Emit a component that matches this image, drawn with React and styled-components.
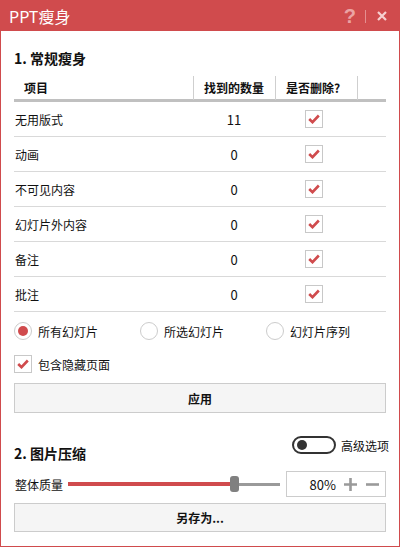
import React, { useState } from "react";
import styled, { createGlobalStyle } from "styled-components";

const RED = "#d04b4d";

const GlobalStyle = createGlobalStyle`
  * { box-sizing: border-box; }
  body {
    margin: 0;
    background: #fff;
    font-family: "Noto Sans CJK SC", "Noto Sans", sans-serif;
    font-size: 12px;
    color: #111;
  }
`;

const rows = [
  { name: "无用版式", count: 11 },
  { name: "动画", count: 0 },
  { name: "不可见内容", count: 0 },
  { name: "幻灯片外内容", count: 0 },
  { name: "备注", count: 0 },
  { name: "批注", count: 0 },
];

const scopes = ["所有幻灯片", "所选幻灯片", "幻灯片序列"];

function CheckMark() {
  return (
    <svg width="12" height="10" viewBox="0 0 12 10">
      <polyline
        points="1.2,5 4.5,8.2 10.8,1.5"
        fill="none"
        stroke={RED}
        strokeWidth="2.6"
        strokeLinejoin="miter"
      />
    </svg>
  );
}

function App() {
  const [checked, setChecked] = useState(rows.map(() => true));
  const [scope, setScope] = useState(0);
  const [hidden, setHidden] = useState(true);
  const [quality, setQuality] = useState(80);

  const toggleRow = (i) =>
    setChecked((c) => c.map((v, idx) => (idx === i ? !v : v)));

  return (
    <>
      <GlobalStyle />
      <W.Window>
        <W.TitleBar>
          <W.Title>PPT瘦身</W.Title>
          <W.TitleActions>
            <W.Help>?</W.Help>
            <W.Divider />
            <svg width="10" height="10" viewBox="0 0 10 10">
              <path d="M1 1l8 8M9 1l-8 8" stroke="#f6d0d0" strokeWidth="2.2" />
            </svg>
          </W.TitleActions>
        </W.TitleBar>

        <W.Body>
          <W.SectionTitle>1. 常规瘦身</W.SectionTitle>

          <T.Header>
            <T.HeadCell>项目</T.HeadCell>
            <T.HeadCell $divider>找到的数量</T.HeadCell>
            <T.HeadCell $divider>是否删除?</T.HeadCell>
            <T.HeadCell $divider />
          </T.Header>

          {rows.map((row, i) => (
            <T.Row key={row.name}>
              <T.Name>{row.name}</T.Name>
              <T.Count>{row.count}</T.Count>
              <T.CheckCell>
                <C.Box onClick={() => toggleRow(i)}>
                  {checked[i] && <CheckMark />}
                </C.Box>
              </T.CheckCell>
              <span />
            </T.Row>
          ))}

          <O.RadioRow>
            {scopes.map((s, i) => (
              <O.Option key={s} onClick={() => setScope(i)}>
                <O.Radio $on={scope === i} />
                {s}
              </O.Option>
            ))}
          </O.RadioRow>

          <O.CheckRow onClick={() => setHidden(!hidden)}>
            <C.Box>{hidden && <CheckMark />}</C.Box>
            包含隐藏页面
          </O.CheckRow>

          <W.Button $top={7}>应用</W.Button>

          <S.Header>
            <W.SectionTitle $flush>2. 图片压缩</W.SectionTitle>
            <S.ToggleWrap>
              <S.Toggle />
              高级选项
            </S.ToggleWrap>
          </S.Header>

          <S.SliderRow>
            <S.Label>整体质量</S.Label>
            <S.Track>
              <S.Fill style={{ width: `${(quality / 100) * 203}px` }} />
              <S.Thumb />
              <S.Rest />
            </S.Track>
            <S.Spin>
              <S.Value>{quality}%</S.Value>
              <S.Step onClick={() => setQuality(Math.min(100, quality + 5))}>
                <svg width="15" height="15" viewBox="0 0 15 15">
                  <path d="M7.5 1v13M1 7.5h13" stroke="#9a9a9a" strokeWidth="2.6" />
                </svg>
              </S.Step>
              <S.Step onClick={() => setQuality(Math.max(0, quality - 5))}>
                <svg width="15" height="15" viewBox="0 0 15 15">
                  <path d="M1 7.5h13" stroke="#9a9a9a" strokeWidth="2.6" />
                </svg>
              </S.Step>
            </S.Spin>
          </S.SliderRow>

          <W.Button $top={6} $height={29}>另存为...</W.Button>
        </W.Body>
      </W.Window>
    </>
  );
}

// W: window frame
const W = {
  Window: styled.div`
    width: 400px;
    height: 547px;
    border: 1px solid ${RED};
    display: flex;
    flex-direction: column;
    background: #fff;
  `,
  TitleBar: styled.div`
    height: 30px;
    background: ${RED};
    display: flex;
    align-items: center;
    justify-content: space-between;
    padding: 0 12px 0 8px;
  `,
  Title: styled.div`
    color: #fff;
    font-size: 16px;
    line-height: 20px;
  `,
  TitleActions: styled.div`
    display: flex;
    align-items: center;
  `,
  Help: styled.span`
    color: #eba3a4;
    font-family: "Liberation Sans", sans-serif;
    font-weight: 700;
    font-size: 20px;
    line-height: 20px;
  `,
  Divider: styled.span`
    width: 1px;
    height: 13px;
    background: #e48f90;
    margin: 0 11px 0 9px;
  `,
  Body: styled.div`
    flex: 1;
    padding: 0 13px;
    display: flex;
    flex-direction: column;
  `,
  SectionTitle: styled.div`
    font-size: 14px;
    font-weight: 700;
    line-height: 20px;
    margin: ${(p) => (p.$flush ? "9px 0 0" : "17px 0 8px")};
  `,
  Button: styled.div`
    height: ${(p) => p.$height || 30}px;
    margin-top: ${(p) => p.$top}px;
    border: 1px solid #cccccc;
    background: #f5f5f5;
    display: flex;
    align-items: center;
    justify-content: center;
    font-weight: 700;
    font-size: 12px;
    cursor: pointer;
  `,
};

// T: table
const cols = "179px 82px 82px 29px";

const T = {
  Header: styled.div`
    display: grid;
    grid-template-columns: ${cols};
    height: 26px;
    border-bottom: 3px solid #c0c0c0;
  `,
  HeadCell: styled.div`
    border-left: ${(p) => (p.$divider ? "1px solid #cfcfcf" : "none")};
    padding-left: 10px;
    font-weight: 700;
    line-height: 24px;
  `,
  Row: styled.div`
    display: grid;
    grid-template-columns: ${cols};
    height: 35px;
    border-bottom: 1px solid #d9d9d9;
    align-items: center;
  `,
  Name: styled.div`
    padding-left: 1px;
  `,
  Count: styled.div`
    text-align: center;
    font-size: 13px;
  `,
  CheckCell: styled.div`
    padding-left: 30px;
    display: flex;
  `,
};

// C: checkbox
const C = {
  Box: styled.div`
    width: 18px;
    height: 18px;
    border: 1px solid #c8c8c8;
    background: #fff;
    display: flex;
    align-items: center;
    justify-content: center;
    cursor: pointer;
    flex-shrink: 0;
  `,
};

// O: options
const O = {
  RadioRow: styled.div`
    display: grid;
    grid-template-columns: 126px 126px 1fr;
    height: 24px;
    margin-top: 7px;
    align-items: center;
  `,
  Option: styled.div`
    display: flex;
    align-items: center;
    gap: 6px;
    cursor: pointer;
  `,
  Radio: styled.div`
    width: 18px;
    height: 18px;
    border-radius: 50%;
    border: 1px solid #cccccc;
    display: flex;
    align-items: center;
    justify-content: center;

    &::after {
      content: "";
      width: 10px;
      height: 10px;
      border-radius: 50%;
      background: ${(p) => (p.$on ? RED : "transparent")};
    }
  `,
  CheckRow: styled.div`
    display: flex;
    align-items: center;
    gap: 6px;
    height: 24px;
    margin-top: 9px;
    cursor: pointer;
  `,
};

// S: image compression section
const S = {
  Header: styled.div`
    display: flex;
    justify-content: space-between;
    align-items: flex-start;
    margin-top: 21px;
    height: 29px;
  `,
  ToggleWrap: styled.div`
    display: flex;
    align-items: center;
    gap: 5px;
    margin-top: 2px;
    margin-right: -3px;
    font-size: 12px;
  `,
  Toggle: styled.div`
    width: 44px;
    height: 18px;
    border: 2px solid #333;
    border-radius: 9px;
    display: flex;
    align-items: center;
    padding-left: 3px;

    &::before {
      content: "";
      width: 10px;
      height: 10px;
      border-radius: 50%;
      background: #333;
    }
  `,
  SliderRow: styled.div`
    display: flex;
    align-items: center;
    height: 26px;
    margin-top: 8px;
  `,
  Label: styled.div`
    width: 54px;
    padding-left: 1px;
  `,
  Track: styled.div`
    width: 212px;
    display: flex;
    align-items: center;
  `,
  Fill: styled.div`
    height: 4px;
    background: ${RED};
  `,
  Thumb: styled.div`
    width: 9px;
    height: 16px;
    border-radius: 3px;
    background: #808080;
  `,
  Rest: styled.div`
    flex: 1;
    height: 3px;
    background: #9a9a9a;
  `,
  Spin: styled.div`
    margin-left: 6px;
    width: 100px;
    height: 26px;
    border: 1px solid #cccccc;
    display: flex;
    align-items: center;
    padding-right: 5px;
  `,
  Value: styled.div`
    flex: 1;
    text-align: right;
    font-size: 13px;
    padding-right: 7px;
  `,
  Step: styled.div`
    display: flex;
    cursor: pointer;
    & + & {
      margin-left: 7px;
    }
  `,
};

export default App;
